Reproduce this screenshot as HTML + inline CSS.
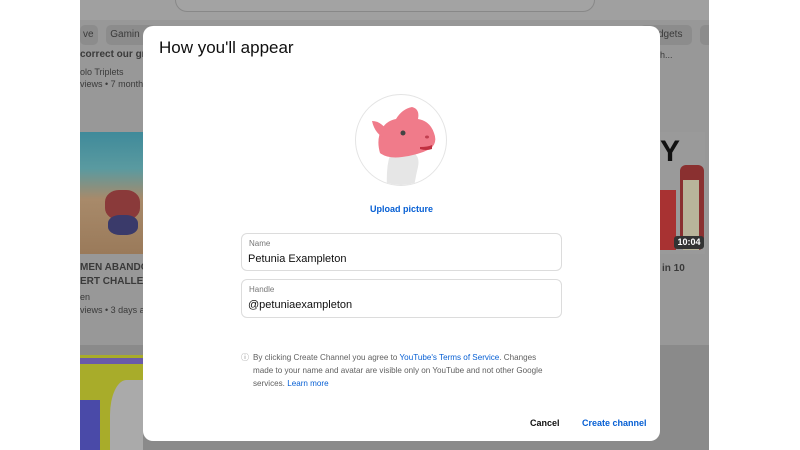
<!DOCTYPE html>
<html><head><meta charset="utf-8"><style>
*{margin:0;padding:0;box-sizing:border-box}
body{width:800px;height:450px;overflow:hidden;background:#fff;font-family:"Liberation Sans",sans-serif;position:relative}
.bg{position:absolute;left:80px;top:0;width:629px;height:450px;background:#989898;overflow:hidden}
.abs{position:absolute}
.t{position:absolute;color:#3a3a3a;font-size:10px;white-space:nowrap}
.dlg{position:absolute;left:143px;top:26px;width:517px;height:415px;background:#fff;border-radius:10px}
.h{position:absolute;left:16px;top:12px;font-size:17px;color:#0f0f0f}
.av{position:absolute;left:212px;top:68px;width:92px;height:92px;border-radius:50%;border:1px solid #e4e4e4;background:#fff;overflow:hidden}
.up{position:absolute;left:0;width:517px;top:178px;text-align:center;color:#065fd4;font-size:9px;font-weight:bold}
.f{position:absolute;left:98px;width:321px;border:1px solid #dcdcdc;border-radius:6px}
.f .l{position:absolute;left:7px;top:5px;font-size:8px;color:#777}
.f .v{position:absolute;left:6px;font-size:11px;color:#0f0f0f}
.note{position:absolute;left:98px;top:325px;width:340px;font-size:8.1px;line-height:13px;color:#606060;padding-left:12px;white-space:nowrap}
.note a{color:#065fd4;text-decoration:none}
.btn{position:absolute;top:392px;font-size:9px;font-weight:bold}
</style></head><body>
<div class="bg">
  <div class="abs" style="left:0;top:0;width:629px;height:20px;background:#a0a0a0"></div>
  <div class="abs" style="left:95px;top:-12px;width:420px;height:24px;border:1px solid #888;border-radius:12px;background:#a3a3a3"></div>
  <div class="abs" style="left:0;top:25px;width:18px;height:20px;background:#8c8c8c;border-radius:5px"></div>
  <div class="abs" style="left:26px;top:25px;width:50px;height:20px;background:#8c8c8c;border-radius:5px"></div>
  <div class="abs" style="left:560px;top:25px;width:52px;height:20px;background:#8c8c8c;border-radius:5px"></div>
  <div class="abs" style="left:620px;top:25px;width:20px;height:20px;background:#8c8c8c;border-radius:5px"></div>
  <div class="t" style="left:3px;top:29px">ve &nbsp;&nbsp;&nbsp;&nbsp; Gamin</div>
  <div class="t" style="left:578px;top:29px">dgets</div>
  <div class="t" style="left:0;top:49px;font-weight:bold">correct our gr</div>
  <div class="t" style="left:0;top:67px;font-size:9px">olo Triplets</div>
  <div class="t" style="left:0;top:79px;font-size:9px">views • 7 months</div>
  <div class="t" style="left:580px;top:50px;font-size:9px">h...</div>
  <div class="abs" style="left:0;top:132px;width:63px;height:122px;background:linear-gradient(180deg,#3f8a9a 0%,#5a9aa0 30%,#a88a6a 55%,#9a7a5a 100%)"></div>
  <div class="abs" style="left:25px;top:190px;width:35px;height:30px;background:#8a3a3a;border-radius:40%"></div>
  <div class="abs" style="left:28px;top:215px;width:30px;height:20px;background:#3a3a6a;border-radius:40%"></div>
  <div class="t" style="left:0;top:262px;font-weight:bold">MEN ABANDO</div>
  <div class="t" style="left:0;top:276px;font-weight:bold">ERT CHALLENC</div>
  <div class="t" style="left:0;top:292px;font-size:9px">en</div>
  <div class="t" style="left:0;top:305px;font-size:9px">views • 3 days ag</div>
  <div class="abs" style="left:580px;top:132px;width:45px;height:122px;background:#9a9a9a"></div>
  <div class="abs" style="left:580px;top:135px;width:20px;height:30px;color:#111;font:bold 30px 'Liberation Sans'">Y</div>
  <div class="abs" style="left:580px;top:190px;width:16px;height:60px;background:#a83232"></div>
  <div class="abs" style="left:600px;top:165px;width:24px;height:85px;background:#8a3030;border-radius:6px"></div>
  <div class="abs" style="left:603px;top:180px;width:16px;height:70px;background:#b8b49a"></div>
  <div class="abs" style="left:594px;top:236px;width:30px;height:13px;background:#333;border-radius:3px;color:#fff;font-size:9px;font-weight:bold;text-align:center;line-height:13px">10:04</div>
  <div class="t" style="left:582px;top:263px;font-weight:bold">in 10</div>
  <div class="abs" style="left:0;top:345px;width:629px;height:105px;background:#8a8a8a"></div>
  <div class="abs" style="left:0;top:355px;width:63px;height:95px;background:#a8ac2a"></div>
  <div class="abs" style="left:0;top:358px;width:63px;height:6px;background:#6a5aa8"></div>
  <div class="abs" style="left:0;top:400px;width:20px;height:50px;background:#4a4aa8"></div>
  <div class="abs" style="left:30px;top:380px;width:33px;height:70px;background:#aaa;border-radius:50% 0 0 0"></div>
</div>
<div class="dlg">
  <div class="h">How you'll appear</div>
  <div class="av">
    <svg width="92" height="92" viewBox="0 0 92 92">
      <path d="M34 60 Q30 72 31 92 L58 92 Q60 80 62 72 Q64 62 58 58 Z" fill="#e6e6e6"/>
      <path d="M24 58 Q20 44 26 34 Q30 26 40 24 Q46 14 56 12 Q64 14 62 24 Q74 26 78 38 Q82 48 74 54 Q62 60 46 62 Q32 64 24 58Z" fill="#f07b8a"/>
      <path d="M16 26 Q24 26 30 34 L26 42 Q18 36 16 26Z" fill="#f07b8a"/>
      <circle cx="47" cy="38" r="2.5" fill="#444"/>
      <ellipse cx="71" cy="42" rx="2" ry="1.5" fill="#c04050"/>
      <path d="M64 52 Q72 52 76 50 L76 54 Q70 56 64 54Z" fill="#c03040"/>
    </svg>
  </div>
  <div class="up">Upload picture</div>
  <div class="f" style="top:207px;height:38px"><div class="l">Name</div><div class="v" style="top:19px">Petunia Exampleton</div></div>
  <div class="f" style="top:253px;height:39px"><div class="l">Handle</div><div class="v" style="top:19px">@petuniaexampleton</div></div>
  <div class="note"><span style="position:absolute;left:0;top:0;font-size:8px;color:#888">ⓘ</span>By clicking Create Channel you agree to <a>YouTube's Terms of Service</a>. Changes<br>made to your name and avatar are visible only on YouTube and not other Google<br>services. <a>Learn more</a></div>
  <div class="btn" style="left:387px;color:#0f0f0f">Cancel</div>
  <div class="btn" style="left:439px;color:#065fd4">Create channel</div>
</div>
</body></html>
